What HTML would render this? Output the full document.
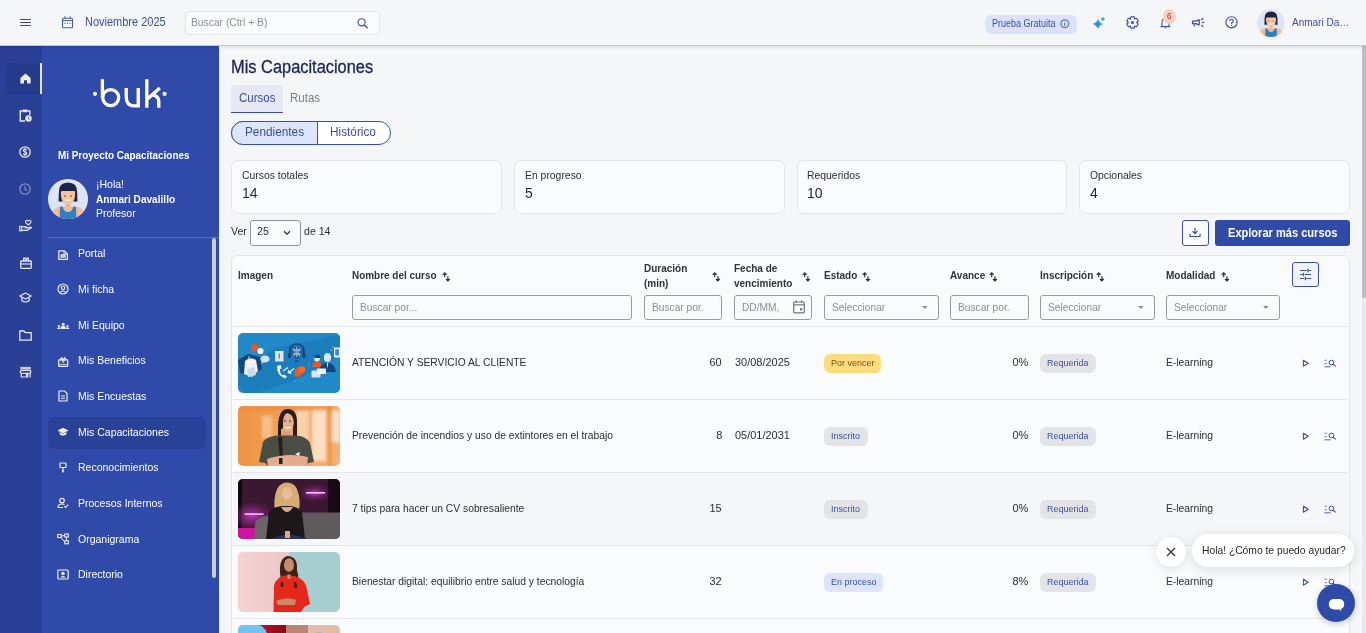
<!DOCTYPE html>
<html><head><meta charset="utf-8">
<style>
*{box-sizing:border-box;margin:0;padding:0}
html,body{width:1366px;height:633px;overflow:hidden;background:#f5f6f9;font-family:"Liberation Sans",sans-serif;color:#2b2f3a;position:relative}
.a{position:absolute}
.t{position:absolute;white-space:nowrap;line-height:1}
svg.a{overflow:visible}
</style></head>
<body>
<div class="a" style="left:219px;top:45px;width:1147px;height:588px;background:#f5f6f8"></div>
<div class="a" style="left:0px;top:45px;width:42px;height:588px;background:#2a3f96"></div>
<div class="a" style="left:42px;top:45px;width:177px;height:588px;background:#2f4aa8"></div>
<div class="a" style="left:0;top:0;width:1366px;height:45px;background:#f5f6f8;z-index:3"></div>
<div class="a" style="left:0;top:44.6px;width:1366px;height:1.4px;background:#c7c8cb;z-index:3"></div>
<div class="a" style="left:0;top:46px;width:1366px;height:4px;background:linear-gradient(rgba(0,0,0,.07),rgba(0,0,0,0));z-index:3"></div>
<svg class="a" style="left:19px;top:17px;z-index:4;" width="13" height="10" viewBox="0 0 13 10"><rect x="1" y="2" width="11" height="1.1" rx="0.5" fill="#2f47a6"/><rect x="1" y="5" width="11" height="1.1" rx="0.5" fill="#2f47a6"/><rect x="1" y="8" width="11" height="1.1" rx="0.5" fill="#2f47a6"/></svg>
<svg class="a" style="left:61px;top:15px;z-index:4;" width="13" height="14" viewBox="0 0 13 14"><rect x="1.5" y="3.3" width="10" height="9.4" rx="1" fill="none" stroke="#4a5db0" stroke-width="1.1"/><line x1="1.5" y1="5.6" x2="11.5" y2="5.6" stroke="#4a5db0" stroke-width="1"/><line x1="3.9" y1="1.2" x2="3.9" y2="3.6" stroke="#4a5db0" stroke-width="1.1"/><line x1="9.1" y1="1.2" x2="9.1" y2="3.6" stroke="#4a5db0" stroke-width="1.1"/><rect x="2.9" y="7.9" width="1.8" height="0.9" fill="#6f7ec0"/><rect x="6" y="7.7" width="1" height="1.2" fill="#4a5db0"/><rect x="8.3" y="7.9" width="1.8" height="0.9" fill="#6f7ec0"/></svg>
<div class="t" style="left:84.5px;top:15.77px;font-size:12.09px;color:#3a4ea6;font-weight:normal;transform:scaleX(0.91);transform-origin:0 0;z-index:4;">Noviembre 2025</div>
<div class="a" style="left:184.5px;top:10.5px;width:195px;height:24px;background:#fafbfc;border:1px solid #e1e3e7;border-radius:4px;z-index:4;"></div>
<div class="t" style="left:190.8px;top:17.42px;font-size:11.32px;color:#8b8e94;font-weight:normal;transform:scaleX(0.91);transform-origin:0 0;z-index:4;">Buscar (Ctrl + B)</div>
<svg class="a" style="left:357px;top:17.5px;z-index:4;" width="12" height="11" viewBox="0 0 12 11"><circle cx="4.6" cy="4.3" r="3.6" fill="none" stroke="#3a4ea6" stroke-width="1.1"/><line x1="7.3" y1="7" x2="10.6" y2="10.2" stroke="#3a4ea6" stroke-width="1.2"/></svg>
<div class="a" style="left:985px;top:15px;width:92px;height:19px;background:#dbe3fa;border-radius:6px;z-index:4;"></div>
<div class="t" style="left:992.4px;top:18.84px;font-size:10.00px;color:#3a4ea6;font-weight:normal;transform:scaleX(0.9);transform-origin:0 0;z-index:4;">Prueba Gratuita</div>
<svg class="a" style="left:1059.5px;top:18.9px;z-index:4;" width="10" height="10" viewBox="0 0 10 10"><circle cx="4.8" cy="4.7" r="4" fill="none" stroke="#3a4ea6" stroke-width="0.9"/><rect x="4.35" y="4" width="0.9" height="3" fill="#3a4ea6"/><rect x="4.35" y="2.3" width="0.9" height="0.9" fill="#3a4ea6"/></svg>
<svg class="a" style="left:1092px;top:16px;z-index:4;" width="14" height="14" viewBox="0 0 14 14"><defs><linearGradient id="sg" x1="0" y1="0" x2="1" y2="0"><stop offset="0" stop-color="#2d73f5"/><stop offset="1" stop-color="#37bd9c"/></linearGradient><linearGradient id="sg2" x1="0" y1="1" x2="1" y2="0"><stop offset="0" stop-color="#2f8ef0"/><stop offset="1" stop-color="#3cc4a0"/></linearGradient></defs><path d="M6 2.9 Q7.3 6.7 11.2 8 Q7.3 9.3 6 13.1 Q4.7 9.3 0.8 8 Q4.7 6.7 6 2.9Z" fill="url(#sg)"/><path d="M11 0.9 L13.1 3 L11 5.1 L8.9 3 Z" fill="url(#sg2)"/></svg>
<svg class="a" style="left:1125.5px;top:16px;z-index:4;" width="13" height="13" viewBox="0 0 13 13"><path d="M4.27 2.94 L4.87 0.83 L8.13 0.83 L8.73 2.94 L8.47 2.79 L10.60 2.26 L12.22 5.07 L10.70 6.65 L10.70 6.35 L12.22 7.93 L10.60 10.74 L8.47 10.21 L8.73 10.06 L8.13 12.17 L4.87 12.17 L4.27 10.06 L4.53 10.21 L2.40 10.74 L0.78 7.93 L2.30 6.35 L2.30 6.65 L0.78 5.07 L2.40 2.26 L4.53 2.79Z" fill="none" stroke="#3a4ea6" stroke-width="1.15" stroke-linejoin="round"/><circle cx="6.5" cy="6.5" r="1.5" fill="#3a4ea6"/></svg>
<svg class="a" style="left:1159.5px;top:17px;z-index:4;" width="11" height="12.5" viewBox="0 0 11 12.5"><path d="M2 9.5 L2 5.4 Q2 1.4 5.5 1.4 Q9 1.4 9 5.4 L9 9.5" fill="none" stroke="#4457ab" stroke-width="1.05"/><path d="M0.6 9.6 L10.4 9.6" stroke="#3a4ea6" stroke-width="1.2"/><path d="M5.5 10 L5.5 11.8" stroke="#8794cc" stroke-width="1.3"/></svg>
<div class="a" style="left:1163px;top:9.3px;width:13.2px;height:14.5px;background:#f9cfbd;border-radius:50%;z-index:4;"></div>
<div class="t" style="left:1167.4px;top:11.68px;font-size:9.00px;color:#b3283a;font-weight:normal;transform:scaleX(0.9);transform-origin:0 0;z-index:4;">6</div>
<svg class="a" style="left:1191px;top:17px;z-index:4;" width="14" height="11" viewBox="0 0 14 11"><path d="M1.5 4.2 L4.6 4.2 L8.2 2.8 L8.2 7.8 L4.6 6.6 L1.5 6.6 Z" fill="none" stroke="#3a4ea6" stroke-width="1.3" stroke-linejoin="round"/><line x1="3.2" y1="6.8" x2="3.2" y2="9.6" stroke="#3a4ea6" stroke-width="1.2"/><line x1="11" y1="5.5" x2="13.2" y2="5.5" stroke="#3a4ea6" stroke-width="1.2"/><line x1="10.3" y1="3" x2="12.2" y2="1.3" stroke="#3a4ea6" stroke-width="1.2"/><line x1="10.3" y1="8" x2="12.2" y2="9.7" stroke="#3a4ea6" stroke-width="1.2"/></svg>
<svg class="a" style="left:1224.5px;top:16px;z-index:4;" width="13" height="13" viewBox="0 0 13 13"><circle cx="6.5" cy="6.3" r="5.6" fill="none" stroke="#3a4ea6" stroke-width="1.15"/><path d="M4.7 4.9 Q4.7 3.2 6.5 3.2 Q8.3 3.2 8.3 4.8 Q8.3 5.8 7.2 6.4 Q6.5 6.8 6.5 8" fill="none" stroke="#3a4ea6" stroke-width="1.15"/><rect x="5.9" y="8.9" width="1.2" height="1.1" fill="#3a4ea6"/></svg>
<svg class="a" style="left:1257px;top:9px;z-index:4;" width="28" height="28" viewBox="0 0 40 40"><defs><clipPath id="c1257"><circle cx="20" cy="20" r="20"/></clipPath></defs><circle cx="20" cy="20" r="20" fill="#e9edf8"/><circle cx="20" cy="20" r="19.3" fill="#dde4f6"/><g clip-path="url(#c1257)"><path d="M10.8 14 Q10.5 3.6 20 3.6 Q29.5 3.6 29.2 14 L29.4 22.6 L25 22.6 L25 18 L15 18 L15 22.6 L10.6 22.6Z" fill="#1b2545"/><path d="M18 22 L22 22 L22.5 27.5 L17.5 27.5Z" fill="#e6a986"/><path d="M12.8 12 Q12.6 25.8 20 25.8 Q27.4 25.8 27.2 12Z" fill="#f4c3a2"/><path d="M12 13.5 Q12.5 5.5 20 5.8 Q27.5 5.5 28 13.5 Q25 9.5 21 10.8 Q16 9.2 12 13.5Z" fill="#1b2545"/><circle cx="17" cy="17" r="0.7" fill="#1b2545"/><circle cx="23" cy="17" r="0.7" fill="#1b2545"/><path d="M17.6 21 Q20 22.6 22.4 21 Q20 21.6 17.6 21Z" fill="#fff" stroke="#fff" stroke-width="0.6"/><path d="M2 40 Q3 29.5 11 27.5 L29 27.5 Q37 29.5 38 40Z" fill="#f2bb98"/><path d="M11.5 41 L12 28 Q14 27 14.8 28 Q16 33 20 33 Q24 33 25.2 28 Q26 27 28 28 L28.5 41Z" fill="#2f7fc3"/></g></svg>
<div class="t" style="left:1292px;top:16.70px;font-size:10.99px;color:#3a4ea6;font-weight:normal;transform:scaleX(0.91);transform-origin:0 0;z-index:4;">Anmari Da…</div>
<div class="a" style="left:6px;top:63px;width:36px;height:31px;background:#263a8b;border-radius:6px 0 0 6px"></div>
<div class="a" style="left:40px;top:63px;width:2px;height:31px;background:#e4e4e4"></div>
<svg class="a" style="left:20px;top:73px;" width="11" height="11" viewBox="0 0 11 11"><path d="M5.5 0.6 L10.6 5 L10.6 10.6 L7 10.6 L7 7.2 L4 7.2 L4 10.6 L0.4 10.6 L0.4 5 Z" fill="#ececec"/></svg>
<svg class="a" style="left:19px;top:109px;" width="13" height="13" viewBox="0 0 13 13"><path d="M3 2 L1.3 2 L1.3 12 L6 12" fill="none" stroke="#e8e8e8" stroke-width="1.4"/><path d="M8.8 2 L10.8 2 L10.8 6" fill="none" stroke="#e8e8e8" stroke-width="1.4"/><rect x="3.3" y="0.6" width="5.4" height="2.6" rx="0.6" fill="#e8e8e8"/><circle cx="9.5" cy="9.5" r="3.2" fill="#e8e8e8"/><path d="M9.5 8 L9.5 9.7 L10.6 10.4" fill="none" stroke="#2a3f96" stroke-width="0.8"/></svg>
<svg class="a" style="left:19px;top:146px;" width="12" height="12" viewBox="0 0 12 12"><circle cx="6" cy="6" r="5.2" fill="none" stroke="#e8e8e8" stroke-width="1.3"/><path d="M7.8 4.2 Q7.6 3.2 6 3.2 Q4.3 3.2 4.3 4.4 Q4.3 5.5 6 5.8 Q7.8 6.1 7.8 7.4 Q7.8 8.7 6 8.7 Q4.3 8.7 4.2 7.6" fill="none" stroke="#e8e8e8" stroke-width="1.1"/><line x1="6" y1="2" x2="6" y2="10" stroke="#e8e8e8" stroke-width="1"/></svg>
<svg class="a" style="left:19px;top:183px;" width="12" height="12" viewBox="0 0 12 12"><circle cx="6" cy="6" r="5.2" fill="none" stroke="#8090c8" stroke-width="1.3"/><path d="M6 3 L6 6.3 L8 7.6" fill="none" stroke="#8090c8" stroke-width="1.2"/></svg>
<svg class="a" style="left:19px;top:219px;" width="13" height="13" viewBox="0 0 13 13"><path d="M9.3 6 L7 3.8 Q6 2.6 7 1.6 Q8.2 0.7 9.3 2 Q10.4 0.7 11.6 1.6 Q12.6 2.6 11.6 3.8 Z" fill="none" stroke="#e8e8e8" stroke-width="1.1"/><rect x="0.7" y="7.3" width="2" height="4.5" fill="none" stroke="#e8e8e8" stroke-width="1.1"/><path d="M2.7 8 L6.5 7.6 L8 8.6 L5.5 9 M2.7 11.4 L8 11.4 L12.4 8.8 Q12 7.8 11 8.2 L8 9.6" fill="none" stroke="#e8e8e8" stroke-width="1.1"/></svg>
<svg class="a" style="left:19.5px;top:257px;" width="12" height="12" viewBox="0 0 12 12"><rect x="0.7" y="4" width="10.6" height="7.3" rx="0.8" fill="none" stroke="#e8e8e8" stroke-width="1.3"/><line x1="0.7" y1="7" x2="11.3" y2="7" stroke="#e8e8e8" stroke-width="1.1"/><path d="M3.6 4 L3.6 1 L8.4 1 L8.4 4 M4.5 1.5 L6 3.4 L7.5 1.5" fill="none" stroke="#e8e8e8" stroke-width="1.1"/></svg>
<svg class="a" style="left:19px;top:292px;" width="13" height="12" viewBox="0 0 13 12"><path d="M6.5 1 L12.2 4 L6.5 7 L0.8 4 Z" fill="none" stroke="#e8e8e8" stroke-width="1.2" stroke-linejoin="round"/><path d="M2.8 5.3 L2.8 8.6 Q6.5 11.4 10.2 8.6 L10.2 5.3" fill="none" stroke="#e8e8e8" stroke-width="1.2"/></svg>
<svg class="a" style="left:19px;top:330px;" width="13" height="11" viewBox="0 0 13 11"><path d="M0.8 1 L5 1 L6.3 2.6 L12.2 2.6 L12.2 10.2 L0.8 10.2 Z" fill="none" stroke="#e8e8e8" stroke-width="1.3" stroke-linejoin="round"/></svg>
<svg class="a" style="left:19px;top:366px;" width="13" height="13" viewBox="0 0 13 13"><rect x="1.3" y="0.9" width="10.5" height="2.6" fill="#c9cde0"/><rect x="1.3" y="4.4" width="10.6" height="3" rx="1.5" fill="none" stroke="#e6e6ea" stroke-width="1.2"/><path d="M2.3 7.4 L2.3 11 L7.6 11 L7.6 7.4 M8.7 7.4 L8.7 11.6 M11.1 7.4 L11.1 11.6" fill="none" stroke="#e6e6ea" stroke-width="1.2"/></svg>
<svg class="a" style="left:90px;top:76px;" width="80" height="34" viewBox="0 0 80 34"><g fill="none" stroke="#fff" stroke-width="3.3"><path d="M12.4 3.2 L12.4 21.5"/><circle cx="20.7" cy="21.6" r="8"/><path d="M36.2 12 L36.2 20.5 Q36.2 29.8 44 29.8 L48.25 29.8 L48.25 12"/><path d="M56.8 3.2 L56.8 31.7"/><path d="M56.8 23.5 L69.8 12 M62.5 18.6 Q68.8 20.5 68.8 25 L68.8 31.7"/></g><circle cx="5" cy="17.8" r="2.1" fill="#fff"/><circle cx="74.6" cy="17.8" r="2.1" fill="#fff"/></svg>
<div class="t" style="left:57.6px;top:150.29px;font-size:10.88px;color:#fff;font-weight:bold;transform:scaleX(0.91);transform-origin:0 0;">Mi Proyecto Capacitaciones</div>
<svg class="a" style="left:48px;top:178.5px;" width="40" height="40" viewBox="0 0 40 40"><defs><clipPath id="c48"><circle cx="20" cy="20" r="20"/></clipPath></defs><circle cx="20" cy="20" r="20" fill="#e9edf8"/><circle cx="20" cy="20" r="19.3" fill="#dde4f6"/><g clip-path="url(#c48)"><path d="M10.8 14 Q10.5 3.6 20 3.6 Q29.5 3.6 29.2 14 L29.4 22.6 L25 22.6 L25 18 L15 18 L15 22.6 L10.6 22.6Z" fill="#1b2545"/><path d="M18 22 L22 22 L22.5 27.5 L17.5 27.5Z" fill="#e6a986"/><path d="M12.8 12 Q12.6 25.8 20 25.8 Q27.4 25.8 27.2 12Z" fill="#f4c3a2"/><path d="M12 13.5 Q12.5 5.5 20 5.8 Q27.5 5.5 28 13.5 Q25 9.5 21 10.8 Q16 9.2 12 13.5Z" fill="#1b2545"/><circle cx="17" cy="17" r="0.7" fill="#1b2545"/><circle cx="23" cy="17" r="0.7" fill="#1b2545"/><path d="M17.6 21 Q20 22.6 22.4 21 Q20 21.6 17.6 21Z" fill="#fff" stroke="#fff" stroke-width="0.6"/><path d="M2 40 Q3 29.5 11 27.5 L29 27.5 Q37 29.5 38 40Z" fill="#f2bb98"/><path d="M11.5 41 L12 28 Q14 27 14.8 28 Q16 33 20 33 Q24 33 25.2 28 Q26 27 28 28 L28.5 41Z" fill="#2f7fc3"/></g></svg>
<div class="t" style="left:95.5px;top:178.53px;font-size:11.54px;color:#fff;font-weight:normal;transform:scaleX(0.91);transform-origin:0 0;">¡Hola!</div>
<div class="t" style="left:95.5px;top:193.60px;font-size:11.10px;color:#fff;font-weight:bold;transform:scaleX(0.91);transform-origin:0 0;">Anmari Davalillo</div>
<div class="t" style="left:95.5px;top:208.03px;font-size:11.54px;color:#fff;font-weight:normal;transform:scaleX(0.91);transform-origin:0 0;">Profesor</div>
<div class="a" style="left:48px;top:237px;width:171px;height:1px;background:#5a70bd"></div>
<div class="a" style="left:212px;top:238px;width:4px;height:340px;background:#c8ccd8;border-radius:2px"></div>
<div class="a" style="left:48px;top:417px;width:158px;height:31.5px;background:#2a4198;border-radius:6px"></div>
<div class="t" style="left:78px;top:247.93px;font-size:11.54px;color:#fff;font-weight:normal;transform:scaleX(0.91);transform-origin:0 0;">Portal</div>
<div class="t" style="left:78px;top:283.53px;font-size:11.54px;color:#fff;font-weight:normal;transform:scaleX(0.91);transform-origin:0 0;">Mi ficha</div>
<div class="t" style="left:78px;top:320.43px;font-size:11.54px;color:#fff;font-weight:normal;transform:scaleX(0.91);transform-origin:0 0;">Mi Equipo</div>
<div class="t" style="left:78px;top:354.83px;font-size:11.54px;color:#fff;font-weight:normal;transform:scaleX(0.91);transform-origin:0 0;">Mis Beneficios</div>
<div class="t" style="left:78px;top:391.43px;font-size:11.54px;color:#fff;font-weight:normal;transform:scaleX(0.91);transform-origin:0 0;">Mis Encuestas</div>
<div class="t" style="left:78px;top:427.43px;font-size:11.54px;color:#fff;font-weight:normal;transform:scaleX(0.91);transform-origin:0 0;">Mis Capacitaciones</div>
<div class="t" style="left:78px;top:461.73px;font-size:11.54px;color:#fff;font-weight:normal;transform:scaleX(0.91);transform-origin:0 0;">Reconocimientos</div>
<div class="t" style="left:78px;top:497.53px;font-size:11.54px;color:#fff;font-weight:normal;transform:scaleX(0.91);transform-origin:0 0;">Procesos Internos</div>
<div class="t" style="left:78px;top:534.23px;font-size:11.54px;color:#fff;font-weight:normal;transform:scaleX(0.91);transform-origin:0 0;">Organigrama</div>
<div class="t" style="left:78px;top:569.03px;font-size:11.54px;color:#fff;font-weight:normal;transform:scaleX(0.91);transform-origin:0 0;">Directorio</div>
<svg class="a" style="left:57px;top:247.7px;" width="12" height="12" viewBox="0 0 12 12"><path d="M1.8 2.8 L7.4 2.8 L10.4 5.8 L10.4 11.4 L1.8 11.4 Z" fill="none" stroke="#f0f0f0" stroke-width="1.2" stroke-linejoin="round"/><rect x="3.4" y="6" width="5.4" height="3.9" fill="#c8cde6"/><path d="M7 3 L7 6 L10 6" fill="none" stroke="#f0f0f0" stroke-width="1"/></svg>
<svg class="a" style="left:57px;top:283.3px;" width="12" height="12" viewBox="0 0 12 12"><circle cx="6" cy="6" r="5" fill="none" stroke="#f0f0f0" stroke-width="1.2"/><circle cx="6" cy="4.8" r="1.8" fill="none" stroke="#f0f0f0" stroke-width="1.1"/><path d="M3 9.5 Q6 6.5 9 9.5" fill="none" stroke="#f0f0f0" stroke-width="1.1"/></svg>
<svg class="a" style="left:57px;top:319.2px;" width="12" height="12" viewBox="0 0 12 12"><circle cx="6.2" cy="5.3" r="1.5" fill="#f0f0f0"/><path d="M3.6 9.9 L3.6 8.4 Q3.6 7.1 6.2 7.1 Q8.8 7.1 8.8 8.4 L8.8 9.9Z" fill="#f0f0f0"/><circle cx="1.9" cy="7" r="1.1" fill="#f0f0f0"/><circle cx="10.5" cy="7" r="1.1" fill="#f0f0f0"/><path d="M0 9.9 Q0 8.3 1.9 8.3 Q3 8.3 3.2 8.8 L3.2 9.9Z M12.4 9.9 Q12.4 8.3 10.5 8.3 Q9.4 8.3 9.2 8.8 L9.2 9.9Z" fill="#f0f0f0"/></svg>
<svg class="a" style="left:57px;top:354.6px;" width="12" height="12" viewBox="0 0 12 12"><rect x="1.7" y="4.9" width="9" height="6.5" rx="0.5" fill="none" stroke="#f0f0f0" stroke-width="1.2"/><rect x="2.3" y="8.9" width="7.8" height="1" fill="#c8cde6"/><path d="M3.2 4.9 L4.6 2.6 L6.2 4.6 L7.8 2.6 L9.2 4.9" fill="none" stroke="#f0f0f0" stroke-width="1.1"/><path d="M5 5 L6.2 7.5 L7.4 5" fill="none" stroke="#f0f0f0" stroke-width="0.9"/></svg>
<svg class="a" style="left:57px;top:390.2px;" width="12" height="12" viewBox="0 0 12 12"><path d="M2 1 L7.5 1 L10 3.5 L10 11 L2 11 Z" fill="none" stroke="#f0f0f0" stroke-width="1.2"/><line x1="4" y1="6" x2="8" y2="6" stroke="#f0f0f0" stroke-width="1"/><line x1="4" y1="8.3" x2="8" y2="8.3" stroke="#f0f0f0" stroke-width="1"/></svg>
<svg class="a" style="left:57px;top:426.2px;" width="12" height="12" viewBox="0 0 12 12"><path d="M6 1.8 L11.5 4.5 L6 7.2 L0.5 4.5 Z" fill="#f0f0f0"/><path d="M2.7 6 L2.7 8.6 Q6 10.8 9.3 8.6 L9.3 6 L6 7.8 Z" fill="#f0f0f0"/></svg>
<svg class="a" style="left:57px;top:461.5px;" width="12" height="12" viewBox="0 0 12 12"><rect x="3" y="1" width="6" height="4.5" rx="0.8" fill="none" stroke="#f0f0f0" stroke-width="1.2"/><line x1="6" y1="5.5" x2="6" y2="8" stroke="#f0f0f0" stroke-width="1.2"/><path d="M6 7.5 L7.3 9 L6 11 L4.7 9 Z" fill="#f0f0f0"/></svg>
<svg class="a" style="left:57px;top:497.3px;" width="12" height="12" viewBox="0 0 12 12"><circle cx="5" cy="3.6" r="2.3" fill="none" stroke="#f0f0f0" stroke-width="1.2"/><path d="M1 10.5 Q1 7 5 7 Q6.5 7 7.5 7.6 M1 10.5 L6 10.5" fill="none" stroke="#f0f0f0" stroke-width="1.2"/><path d="M7.3 9.2 L8.6 10.5 L11.2 7.6" fill="none" stroke="#f0f0f0" stroke-width="1.1"/></svg>
<svg class="a" style="left:57px;top:533px;" width="12" height="12" viewBox="0 0 12 12"><rect x="0.7" y="1.5" width="3.5" height="3" fill="none" stroke="#f0f0f0" stroke-width="1.1"/><rect x="7.8" y="1" width="3.5" height="3" fill="none" stroke="#f0f0f0" stroke-width="1.1"/><rect x="7.8" y="7.8" width="3.5" height="3" fill="none" stroke="#f0f0f0" stroke-width="1.1"/><path d="M4.2 3 L7.8 2.5 M9.5 4 L9.5 7.8 M4 4.5 L7.8 9" fill="none" stroke="#f0f0f0" stroke-width="1"/></svg>
<svg class="a" style="left:57px;top:568px;" width="12" height="12" viewBox="0 0 12 12"><rect x="0.8" y="2" width="10.4" height="9" rx="1" fill="none" stroke="#f0f0f0" stroke-width="1.2"/><circle cx="6" cy="5.5" r="1.7" fill="#f0f0f0"/><path d="M3 9.5 Q6 6.5 9 9.5Z" fill="#f0f0f0"/></svg>
<div class="t" style="left:230.8px;top:58.04px;font-size:18.02px;color:#1b2457;font-weight:normal;transform:scaleX(0.91);transform-origin:0 0;-webkit-text-stroke:0.3px #1b2457;">Mis Capacitaciones</div>
<div class="a" style="left:231px;top:84.5px;width:52px;height:28px;background:#e6e9f3;border-radius:4px 4px 0 0"></div>
<div class="a" style="left:231px;top:111.5px;width:52px;height:1.6px;background:#3a4ea6"></div>
<div class="t" style="left:238.5px;top:92.30px;font-size:12.64px;color:#3a4ea6;font-weight:normal;transform:scaleX(0.91);transform-origin:0 0;">Cursos</div>
<div class="t" style="left:289.8px;top:92.30px;font-size:12.64px;color:#7b7e86;font-weight:normal;transform:scaleX(0.91);transform-origin:0 0;">Rutas</div>
<div class="a" style="left:231px;top:121px;width:160px;height:24px;background:#fff;border:1.2px solid #3a4ea6;border-radius:12px"></div>
<div class="a" style="left:231px;top:121px;width:87px;height:24px;background:#dde5fb;border:1.2px solid #3a4ea6;border-radius:12px 0 0 12px"></div>
<div class="t" style="left:244.5px;top:126.42px;font-size:12.97px;color:#3a4ea6;font-weight:normal;transform:scaleX(0.91);transform-origin:0 0;">Pendientes</div>
<div class="t" style="left:329.5px;top:126.42px;font-size:12.97px;color:#3a4ea6;font-weight:normal;transform:scaleX(0.91);transform-origin:0 0;">Histórico</div>
<div class="a" style="left:231px;top:160px;width:270.5px;height:53.5px;background:#fafbfc;border:1px solid #e4e5e8;border-radius:7px"></div>
<div class="t" style="left:241.5px;top:169.93px;font-size:11.43px;color:#2a2d37;font-weight:normal;transform:scaleX(0.91);transform-origin:0 0;">Cursos totales</div>
<div class="t" style="left:241.5px;top:184.68px;font-size:15.38px;color:#1f2230;font-weight:normal;transform:scaleX(0.91);transform-origin:0 0;">14</div>
<div class="a" style="left:514px;top:160px;width:270.5px;height:53.5px;background:#fafbfc;border:1px solid #e4e5e8;border-radius:7px"></div>
<div class="t" style="left:524.5px;top:169.93px;font-size:11.43px;color:#2a2d37;font-weight:normal;transform:scaleX(0.91);transform-origin:0 0;">En progreso</div>
<div class="t" style="left:524.5px;top:184.68px;font-size:15.38px;color:#1f2230;font-weight:normal;transform:scaleX(0.91);transform-origin:0 0;">5</div>
<div class="a" style="left:796.6px;top:160px;width:270.5px;height:53.5px;background:#fafbfc;border:1px solid #e4e5e8;border-radius:7px"></div>
<div class="t" style="left:807.1px;top:169.93px;font-size:11.43px;color:#2a2d37;font-weight:normal;transform:scaleX(0.91);transform-origin:0 0;">Requeridos</div>
<div class="t" style="left:807.1px;top:184.68px;font-size:15.38px;color:#1f2230;font-weight:normal;transform:scaleX(0.91);transform-origin:0 0;">10</div>
<div class="a" style="left:1079px;top:160px;width:270.5px;height:53.5px;background:#fafbfc;border:1px solid #e4e5e8;border-radius:7px"></div>
<div class="t" style="left:1089.5px;top:169.93px;font-size:11.43px;color:#2a2d37;font-weight:normal;transform:scaleX(0.91);transform-origin:0 0;">Opcionales</div>
<div class="t" style="left:1089.5px;top:184.68px;font-size:15.38px;color:#1f2230;font-weight:normal;transform:scaleX(0.91);transform-origin:0 0;">4</div>
<div class="t" style="left:231.3px;top:225.14px;font-size:11.65px;color:#2a2d37;font-weight:normal;transform:scaleX(0.91);transform-origin:0 0;">Ver</div>
<div class="a" style="left:250px;top:220px;width:51px;height:25.6px;background:#fafbfc;border:1px solid #8f9298;border-radius:3px"></div>
<div class="t" style="left:257px;top:225.04px;font-size:11.65px;color:#2a2d37;font-weight:normal;transform:scaleX(0.91);transform-origin:0 0;">25</div>
<svg class="a" style="left:283px;top:229.5px;" width="8" height="6" viewBox="0 0 8 6"><path d="M1 1.2 L4 4.2 L7 1.2" fill="none" stroke="#2a2d37" stroke-width="1.3"/></svg>
<div class="t" style="left:303.5px;top:225.14px;font-size:11.65px;color:#2a2d37;font-weight:normal;transform:scaleX(0.91);transform-origin:0 0;">de 14</div>
<div class="a" style="left:1182.3px;top:220px;width:26.4px;height:25.6px;background:#fafbfc;border:1px solid #3a4ea6;border-radius:3px"></div>
<svg class="a" style="left:1189px;top:227px;" width="12" height="11" viewBox="0 0 12 11"><path d="M6 0.8 L6 6.5 M3.5 4.2 L6 6.7 L8.5 4.2" fill="none" stroke="#3a4ea6" stroke-width="1.2"/><path d="M1 6.8 L1 9.5 L11 9.5 L11 6.8" fill="none" stroke="#3a4ea6" stroke-width="1.2"/></svg>
<div class="a" style="left:1215.2px;top:220px;width:134.6px;height:25.6px;background:#2f4aa7;border-radius:3px"></div>
<div class="t" style="left:1227.5px;top:226.70px;font-size:12.16px;color:#fff;font-weight:bold;transform:scaleX(0.91);transform-origin:0 0;">Explorar más cursos</div>
<div class="a" style="left:231px;top:255px;width:1118.5px;height:400px;background:#fafbfc;border:1px solid #e3e5ea;border-radius:6px"></div>
<div class="t" style="left:238.2px;top:269.90px;font-size:10.99px;color:#30333b;font-weight:bold;transform:scaleX(0.91);transform-origin:0 0;">Imagen</div>
<div class="t" style="left:352.4px;top:269.94px;font-size:10.93px;color:#30333b;font-weight:bold;transform:scaleX(0.91);transform-origin:0 0;">Nombre del curso</div>
<svg class="a" style="left:441.5px;top:272.2px;" width="9" height="10" viewBox="0 0 9 10"><g fill="none" stroke="#2a2d37" stroke-width="1.15"><path d="M2.7 1 L2.7 5.2 M0.7 2.9 L2.7 0.8 L4.7 2.9"/><path d="M5.9 4.2 L5.9 8.8 M3.9 6.9 L5.9 9 L7.9 6.9"/></g></svg>
<div class="t" style="left:644.2px;top:262.60px;font-size:10.99px;color:#30333b;font-weight:bold;transform:scaleX(0.91);transform-origin:0 0;">Duración</div>
<div class="t" style="left:644.2px;top:278.00px;font-size:10.99px;color:#30333b;font-weight:bold;transform:scaleX(0.91);transform-origin:0 0;">(min)</div>
<svg class="a" style="left:711.5px;top:272.2px;" width="9" height="10" viewBox="0 0 9 10"><g fill="none" stroke="#2a2d37" stroke-width="1.15"><path d="M2.7 1 L2.7 5.2 M0.7 2.9 L2.7 0.8 L4.7 2.9"/><path d="M5.9 4.2 L5.9 8.8 M3.9 6.9 L5.9 9 L7.9 6.9"/></g></svg>
<div class="t" style="left:734.2px;top:262.60px;font-size:10.99px;color:#30333b;font-weight:bold;transform:scaleX(0.91);transform-origin:0 0;">Fecha de</div>
<div class="t" style="left:734.2px;top:278.00px;font-size:10.99px;color:#30333b;font-weight:bold;transform:scaleX(0.91);transform-origin:0 0;">vencimiento</div>
<svg class="a" style="left:801.6px;top:272.2px;" width="9" height="10" viewBox="0 0 9 10"><g fill="none" stroke="#2a2d37" stroke-width="1.15"><path d="M2.7 1 L2.7 5.2 M0.7 2.9 L2.7 0.8 L4.7 2.9"/><path d="M5.9 4.2 L5.9 8.8 M3.9 6.9 L5.9 9 L7.9 6.9"/></g></svg>
<div class="t" style="left:824.3px;top:269.90px;font-size:10.99px;color:#30333b;font-weight:bold;transform:scaleX(0.91);transform-origin:0 0;">Estado</div>
<svg class="a" style="left:861.7px;top:272.2px;" width="9" height="10" viewBox="0 0 9 10"><g fill="none" stroke="#2a2d37" stroke-width="1.15"><path d="M2.7 1 L2.7 5.2 M0.7 2.9 L2.7 0.8 L4.7 2.9"/><path d="M5.9 4.2 L5.9 8.8 M3.9 6.9 L5.9 9 L7.9 6.9"/></g></svg>
<div class="t" style="left:950.3px;top:269.90px;font-size:10.99px;color:#30333b;font-weight:bold;transform:scaleX(0.91);transform-origin:0 0;">Avance</div>
<svg class="a" style="left:988.7px;top:272.2px;" width="9" height="10" viewBox="0 0 9 10"><g fill="none" stroke="#2a2d37" stroke-width="1.15"><path d="M2.7 1 L2.7 5.2 M0.7 2.9 L2.7 0.8 L4.7 2.9"/><path d="M5.9 4.2 L5.9 8.8 M3.9 6.9 L5.9 9 L7.9 6.9"/></g></svg>
<div class="t" style="left:1040.3px;top:269.90px;font-size:10.99px;color:#30333b;font-weight:bold;transform:scaleX(0.91);transform-origin:0 0;">Inscripción</div>
<svg class="a" style="left:1096.3px;top:272.2px;" width="9" height="10" viewBox="0 0 9 10"><g fill="none" stroke="#2a2d37" stroke-width="1.15"><path d="M2.7 1 L2.7 5.2 M0.7 2.9 L2.7 0.8 L4.7 2.9"/><path d="M5.9 4.2 L5.9 8.8 M3.9 6.9 L5.9 9 L7.9 6.9"/></g></svg>
<div class="t" style="left:1166px;top:269.90px;font-size:10.99px;color:#30333b;font-weight:bold;transform:scaleX(0.91);transform-origin:0 0;">Modalidad</div>
<svg class="a" style="left:1220.7px;top:272.2px;" width="9" height="10" viewBox="0 0 9 10"><g fill="none" stroke="#2a2d37" stroke-width="1.15"><path d="M2.7 1 L2.7 5.2 M0.7 2.9 L2.7 0.8 L4.7 2.9"/><path d="M5.9 4.2 L5.9 8.8 M3.9 6.9 L5.9 9 L7.9 6.9"/></g></svg>
<div class="a" style="left:1292.2px;top:262.3px;width:26.5px;height:24.4px;background:#f3f4f6;border:1px solid #3a4ea6;border-radius:3px"></div>
<svg class="a" style="left:1299px;top:268px;" width="14" height="13" viewBox="0 0 14 13"><g stroke="#3a4ea6" stroke-width="1.1" fill="none"><path d="M1 2.5 L7.6 2.5 M10 2.5 L12.2 2.5 M1 6.5 L3.2 6.5 M5.6 6.5 L12.2 6.5 M1 10.5 L5.4 10.5 M7.6 10.5 L12.2 10.5"/><path d="M9 0.8 L9 4.2 M4.4 4.8 L4.4 8.2 M6.5 8.8 L6.5 12.2" stroke-width="1.3"/></g></svg>
<div class="a" style="left:352px;top:295px;width:280px;height:25px;background:#fafbfc;border:1px solid #9a9b9f;border-radius:3px"></div>
<div class="t" style="left:359.6px;top:302.41px;font-size:11.21px;color:#8b8e94;font-weight:normal;transform:scaleX(0.91);transform-origin:0 0;">Buscar por...</div>
<div class="a" style="left:644px;top:295px;width:78px;height:25px;background:#fafbfc;border:1px solid #9a9b9f;border-radius:3px"></div>
<div class="t" style="left:651.6px;top:302.41px;font-size:11.21px;color:#8b8e94;font-weight:normal;transform:scaleX(0.91);transform-origin:0 0;">Buscar por.</div>
<div class="a" style="left:734px;top:295px;width:78px;height:25px;background:#fafbfc;border:1px solid #9a9b9f;border-radius:3px"></div>
<div class="t" style="left:741.6px;top:302.41px;font-size:11.21px;color:#8b8e94;font-weight:normal;transform:scaleX(0.91);transform-origin:0 0;">DD/MM,</div>
<svg class="a" style="left:792.5px;top:300.4px;" width="12" height="13.5" viewBox="0 0 12 13.5"><rect x="0.7" y="2" width="10.6" height="10.8" rx="1" fill="none" stroke="#6f7278" stroke-width="1.2"/><line x1="0.7" y1="4.8" x2="11.3" y2="4.8" stroke="#6f7278" stroke-width="1.1"/><line x1="3.3" y1="0.2" x2="3.3" y2="2.8" stroke="#6f7278" stroke-width="1.2"/><line x1="8.7" y1="0.2" x2="8.7" y2="2.8" stroke="#6f7278" stroke-width="1.2"/><rect x="7" y="8.2" width="2.2" height="2.2" fill="#6f7278"/></svg>
<div class="a" style="left:824px;top:295px;width:114.5px;height:25px;background:#fafbfc;border:1px solid #9a9b9f;border-radius:3px"></div>
<div class="t" style="left:831.6px;top:302.41px;font-size:11.21px;color:#8b8e94;font-weight:normal;transform:scaleX(0.91);transform-origin:0 0;">Seleccionar</div>
<svg class="a" style="left:921.7px;top:305.8px;" width="6" height="3.5" viewBox="0 0 6 3.5"><path d="M0 0 L5.6 0 L2.8 2.9Z" fill="#8c8d91"/></svg>
<div class="a" style="left:950px;top:295px;width:78.5px;height:25px;background:#fafbfc;border:1px solid #9a9b9f;border-radius:3px"></div>
<div class="t" style="left:957.6px;top:302.41px;font-size:11.21px;color:#8b8e94;font-weight:normal;transform:scaleX(0.91);transform-origin:0 0;">Buscar por.</div>
<div class="a" style="left:1040px;top:295px;width:114.5px;height:25px;background:#fafbfc;border:1px solid #9a9b9f;border-radius:3px"></div>
<div class="t" style="left:1047.6px;top:302.41px;font-size:11.21px;color:#8b8e94;font-weight:normal;transform:scaleX(0.91);transform-origin:0 0;">Seleccionar</div>
<svg class="a" style="left:1137.7px;top:305.8px;" width="6" height="3.5" viewBox="0 0 6 3.5"><path d="M0 0 L5.6 0 L2.8 2.9Z" fill="#8c8d91"/></svg>
<div class="a" style="left:1166px;top:295px;width:114px;height:25px;background:#fafbfc;border:1px solid #9a9b9f;border-radius:3px"></div>
<div class="t" style="left:1173.6px;top:302.41px;font-size:11.21px;color:#8b8e94;font-weight:normal;transform:scaleX(0.91);transform-origin:0 0;">Seleccionar</div>
<svg class="a" style="left:1263.2px;top:305.8px;" width="6" height="3.5" viewBox="0 0 6 3.5"><path d="M0 0 L5.6 0 L2.8 2.9Z" fill="#8c8d91"/></svg>
<div class="a" style="left:232.5px;top:326px;width:1115.5px;height:1px;background:#e3e5ea"></div>
<div class="a" style="left:232.5px;top:399px;width:1115.5px;height:1px;background:#e3e5ea"></div>
<div class="a" style="left:232.5px;top:472px;width:1115.5px;height:73px;background:#f5f6f8"></div>
<div class="a" style="left:232.5px;top:472px;width:1115.5px;height:1px;background:#e3e5ea"></div>
<div class="a" style="left:232.5px;top:545px;width:1115.5px;height:1px;background:#e3e5ea"></div>
<div class="a" style="left:232.5px;top:618px;width:1115.5px;height:1px;background:#e3e5ea"></div>
<svg class="a" style="left:238px;top:333px;border-radius:5px" width="102" height="60" viewBox="0 0 102 60"><defs><clipPath id="r1"><rect width="102" height="60" rx="5"/></clipPath></defs><g clip-path="url(#r1)"><rect width="102" height="60" fill="#2189c8"/><path d="M0 52 L0 38 L40 14 L102 2 L102 22 L60 46 L20 60 L8 60Z" fill="#1a7ab8" opacity="0.75"/><path d="M0 27 L10 21 L22 24 L24 36 L14 43 L2 40Z" fill="#14457e"/><path d="M7 28 Q12 23 18 27 L20 38 L14 44 L6 41 Z" fill="#eef2f5"/><path d="M9 36 L16 34 L18 42 L10 44Z" fill="#c9dbe6"/><path d="M11 23 Q10 30 12 36" fill="none" stroke="#eef2f5" stroke-width="0.8"/><circle cx="16.7" cy="14.5" r="3.6" fill="#f0561f"/><path d="M14 17 L13.5 19.5 L16 17.8Z" fill="#f0561f"/><circle cx="22.4" cy="18" r="3.1" fill="#f4f6f8"/><ellipse cx="27" cy="26" rx="4.6" ry="3.6" fill="#d4e3ec"/><path d="M24 28.5 L23 31 L26 29Z" fill="#d4e3ec"/><rect x="37" y="18" width="8.5" height="10.5" fill="#dce6ee"/><rect x="40.6" y="20.5" width="1.4" height="5" fill="#f0561f"/><circle cx="58.8" cy="19.5" r="6.2" fill="#1c5e9a"/><path d="M51.5 22 Q51 11 58.8 11 Q66.6 11 66.1 22" fill="none" stroke="#14457e" stroke-width="1.6"/><rect x="50" y="20" width="3" height="5" rx="1" fill="#14457e"/><rect x="64.6" y="20" width="3" height="5" rx="1" fill="#14457e"/><path d="M54.5 17 L63 17 M54.5 21 L63 21 M58.8 14 L58.8 24 M55.5 15.5 Q58.8 19.5 55.5 23.5 M62 15.5 Q58.8 19.5 62 23.5" fill="none" stroke="#e6eef4" stroke-width="0.7"/><rect x="57" y="27.5" width="4" height="1.5" fill="#14457e"/><path d="M39 33 Q38.5 42 47 45.5 L49 43.8 L46 41.5 L44.5 42.6 Q41.5 40 42 36 L43.5 35.5 L42.6 32 Z" fill="#f4f6f8"/><path d="M45 38 L50 34.5 M50.5 40 L56 35.5 M50.5 40 L53.5 40 M50.5 40 L50.5 37" fill="none" stroke="#e6eef4" stroke-width="1.3"/><circle cx="61" cy="38.5" r="4.4" fill="#f0561f"/><circle cx="64" cy="36.5" r="3.2" fill="#f36d30"/><circle cx="59" cy="41.5" r="2.5" fill="#ee5a20"/><circle cx="79" cy="26" r="2.8" fill="#e4ecf1"/><path d="M77 22.5 Q79 20.5 82 22.5 L82 25 L76.5 25Z" fill="#14457e"/><path d="M74 34 Q75 28 79 28.5 Q83 28 84 34Z" fill="#f0561f"/><ellipse cx="89.5" cy="24.5" rx="3.6" ry="4.5" fill="#dfe8ee"/><path d="M80.5 39 Q82 30 89.5 30 Q97 30 98 39Z" fill="#14457e"/><path d="M88.8 30 L89.5 36 L90.2 30Z" fill="#e4ecf1"/><rect x="73.5" y="37.5" width="9" height="7" rx="0.8" fill="#dbe5ec"/><rect x="79" y="35.5" width="9" height="5.5" rx="0.8" fill="#eef2f5"/><rect x="96" y="14.5" width="6" height="10" rx="0.8" fill="#eef2f5"/><rect x="97.2" y="16.3" width="3.8" height="6.2" fill="#3b8fd0"/><circle cx="93" cy="17" r="0.7" fill="#9fd0ee"/><circle cx="95" cy="14" r="0.7" fill="#9fd0ee"/><circle cx="71" cy="33" r="0.6" fill="#9fd0ee"/><circle cx="71" cy="30" r="0.6" fill="#9fd0ee"/><circle cx="64" cy="48" r="0.6" fill="#9fd0ee"/><circle cx="57" cy="48" r="0.6" fill="#9fd0ee"/></g></svg>
<svg class="a" style="left:238px;top:406px;border-radius:5px" width="102" height="60" viewBox="0 0 102 60"><defs><clipPath id="r2"><rect width="102" height="60" rx="5"/></clipPath><linearGradient id="og" x1="0" x2="1"><stop offset="0" stop-color="#ee9443"/><stop offset="0.45" stop-color="#f0a158"/><stop offset="1" stop-color="#f4b27a"/></linearGradient><filter id="bl2" x="-20%" y="-20%" width="140%" height="140%"><feGaussianBlur stdDeviation="1.8"/></filter></defs><g clip-path="url(#r2)"><rect width="102" height="60" fill="url(#og)"/><g filter="url(#bl2)"><rect x="24" y="10" width="10" height="22" fill="#f6c89c" opacity="0.8"/><rect x="58" y="4" width="13" height="40" fill="#fad7b4" opacity="0.9"/><rect x="74" y="3" width="14" height="52" fill="#fde4cb" opacity="0.9"/><rect x="89" y="-2" width="5" height="64" fill="#f09a4a"/><rect x="94" y="0" width="8" height="36" fill="#fbe2c9"/><rect x="0" y="0" width="102" height="5" fill="#e98a38" opacity="0.6"/></g><path d="M40 26 Q39 4 49 3 Q59 3 59 16 L59 30 L55 30 L55 20 L43 20 L43 50 L40 52Z" fill="#2a1c16"/><rect x="45.5" y="24" width="7" height="8" fill="#d99f80"/><ellipse cx="49.5" cy="16.5" rx="6.3" ry="9.3" fill="#e6b092"/><path d="M46.5 21 Q49.5 23 52.5 21" fill="none" stroke="#fff" stroke-width="1.1"/><circle cx="47" cy="15" r="0.8" fill="#2a1c16"/><circle cx="52" cy="15" r="0.8" fill="#2a1c16"/><path d="M42 24 Q40 4 50 4 Q44 10 45 22 Z" fill="#2a1c16"/><path d="M21 56 L25 36 Q29 30 41 29.5 L58 29.5 Q69 30.5 72 37 L76 56 L70 57 L68 60 L30 60 L27 57Z" fill="#4a4d44"/><path d="M40 31 L42 52 L45 52 L44 31Z" fill="#2a1c16"/><path d="M29 53 Q50 46 70 51 L69 60 L30 60Z" fill="#e3ac8d"/><rect x="41" y="52" width="3.5" height="6" fill="#222"/><path d="M57 48 L62 46 L61 50Z" fill="#eee"/></g></svg>
<svg class="a" style="left:238px;top:479px;border-radius:5px" width="102" height="60" viewBox="0 0 102 60"><defs><clipPath id="r3"><rect width="102" height="60" rx="5"/></clipPath><radialGradient id="gl"><stop offset="0" stop-color="#d13ad0" stop-opacity="0.85"/><stop offset="1" stop-color="#7a1f6a" stop-opacity="0"/></radialGradient></defs><g clip-path="url(#r3)"><rect width="102" height="60" fill="#3b1832"/><rect x="0" y="0" width="4" height="60" fill="#120810"/><rect x="90" y="0" width="12" height="34" fill="#170a14"/><ellipse cx="14" cy="37" rx="24" ry="15" fill="url(#gl)"/><rect x="6.5" y="34.3" width="19" height="1.6" fill="#fbc0ff"/><ellipse cx="77" cy="14" rx="17" ry="9" fill="url(#gl)"/><rect x="68" y="13" width="19" height="1.6" fill="#fbc0ff"/><rect x="0" y="49" width="18" height="11" fill="#d0149f"/><rect x="58" y="33.5" width="44" height="26.5" fill="#5f5b5c"/><path d="M16 60 L17 44 Q20 37 30 37 L33 60Z" fill="#6a6667"/><rect x="30" y="45" width="35" height="15" fill="#585455"/><path d="M37 31 Q35 20 39 10 Q43 3 49 3.5 Q56 3.5 59 10 Q63 20 61 31 Q55 27 49 27 Q42 27 37 31Z" fill="#d5ad74"/><ellipse cx="49" cy="14.5" rx="5" ry="6.5" fill="#e7bb9b"/><path d="M28 60 L31 33 Q37 26 49 27 Q60 27 64 33 L67 60Z" fill="#1d1719"/><path d="M43 28 Q49 38 55 28Z" fill="#dca98b"/><path d="M34 60 Q49 52 70 60Z" fill="#25355a"/><rect x="47" y="52" width="5" height="7" fill="#d9a98a"/></g></svg>
<svg class="a" style="left:238px;top:552px;border-radius:5px" width="102" height="60" viewBox="0 0 102 60"><defs><clipPath id="r4"><rect width="102" height="60" rx="5"/></clipPath><linearGradient id="pk" x1="0" x2="1"><stop offset="0" stop-color="#f6d3d2"/><stop offset="1" stop-color="#ebc6c6"/></linearGradient></defs><g clip-path="url(#r4)"><rect width="52" height="60" fill="url(#pk)"/><rect x="51.3" width="51" height="60" fill="#a6cdd0"/><path d="M44 32 Q38 8 49 4 Q60 4 59 18 Q62 28 58 35 L45 35Z" fill="#3a2419"/><ellipse cx="51" cy="13" rx="5" ry="6.8" fill="#c98d69"/><path d="M35.5 60 L36 34 Q38 24 50 23 Q64 24 68 33 L72 52 L66 55 L63 60Z" fill="#e6281b"/><path d="M44 30 L44 35 M57 30 L58 36" stroke="#3a2419" stroke-width="2.5"/><path d="M38 49 Q48 44 58 48 L57 53 L40 53Z" fill="#cf8865"/><path d="M51 22.5 L51 27" stroke="#c98d69" stroke-width="3"/></g></svg>
<svg class="a" style="left:238px;top:625px;border-radius:5px" width="102" height="60" viewBox="0 0 102 60"><defs><clipPath id="r5"><rect width="102" height="60" rx="5"/></clipPath><linearGradient id="rd" x1="0" x2="1"><stop offset="0" stop-color="#c8102c"/><stop offset="1" stop-color="#7d0a18"/></linearGradient></defs><g clip-path="url(#r5)"><rect width="102" height="60" fill="#e3bda6"/><rect x="18" width="33" height="60" fill="url(#rd)"/><rect x="48" width="22" height="60" fill="#b78670"/><ellipse cx="12" cy="10" rx="17" ry="12" fill="#72c5ef"/><ellipse cx="81" cy="10" rx="6" ry="3" fill="#78c8f0"/></g></svg>
<div class="t" style="left:352.3px;top:356.52px;font-size:11.32px;color:#2a2d37;font-weight:normal;transform:scaleX(0.91);transform-origin:0 0;">ATENCIÓN Y SERVICIO AL CLIENTE</div>
<div class="t" style="right:644px;top:356.84px;font-size:11.30px;color:#2a2d37;font-weight:normal;transform:scaleX(0.97);transform-origin:100% 0;">60</div>
<div class="t" style="left:734.7px;top:356.84px;font-size:11.30px;color:#2a2d37;font-weight:normal;transform:scaleX(0.97);transform-origin:0 0;">30/08/2025</div>
<div class="a" style="left:824.3px;top:354.1px;width:57px;height:18.8px;background:#fddb7f;border-radius:6px"></div>
<div class="t" style="left:831.3px;top:358.13px;font-size:9.89px;color:#8a4a0e;font-weight:normal;transform:scaleX(0.91);transform-origin:0 0;">Por vencer</div>
<div class="t" style="right:338px;top:356.84px;font-size:11.30px;color:#2a2d37;font-weight:normal;transform:scaleX(0.97);transform-origin:100% 0;">0%</div>
<div class="a" style="left:1040.3px;top:354.1px;width:55.6px;height:18.8px;background:#e3e4e8;border-radius:6px"></div>
<div class="t" style="left:1047px;top:358.13px;font-size:9.89px;color:#3a4ea6;font-weight:normal;transform:scaleX(0.91);transform-origin:0 0;">Requerida</div>
<div class="t" style="left:1166.3px;top:356.52px;font-size:11.32px;color:#2a2d37;font-weight:normal;transform:scaleX(0.91);transform-origin:0 0;">E-learning</div>
<svg class="a" style="left:1302px;top:359px;" width="8" height="9" viewBox="0 0 8 9"><path d="M1.4 1.2 L6.2 4.2 L1.4 7.2 Z" fill="none" stroke="#3a4ea6" stroke-width="1.05" stroke-linejoin="round"/></svg>
<svg class="a" style="left:1324px;top:359px;" width="13" height="9" viewBox="0 0 13 9"><g stroke="#3a4ea6" fill="none"><path d="M0.4 1.2 L3 1.2 M0.4 4.7 L3 4.7" stroke="#7d8ac4" stroke-width="1"/><path d="M0.4 7.8 L6.7 7.8" stroke="#5666b2" stroke-width="1"/><circle cx="7.4" cy="3.5" r="2.3" stroke-width="1"/><path d="M9 5.2 L11.8 7.4" stroke-width="1.1"/></g></svg>
<div class="t" style="left:352.3px;top:429.52px;font-size:11.32px;color:#2a2d37;font-weight:normal;transform:scaleX(0.91);transform-origin:0 0;">Prevención de incendios y uso de extintores en el trabajo</div>
<div class="t" style="right:644px;top:429.84px;font-size:11.30px;color:#2a2d37;font-weight:normal;transform:scaleX(0.97);transform-origin:100% 0;">8</div>
<div class="t" style="left:734.7px;top:429.84px;font-size:11.30px;color:#2a2d37;font-weight:normal;transform:scaleX(0.97);transform-origin:0 0;">05/01/2031</div>
<div class="a" style="left:824.3px;top:427.1px;width:43.6px;height:18.8px;background:#e3e4e8;border-radius:6px"></div>
<div class="t" style="left:831.3px;top:431.13px;font-size:9.89px;color:#3a4ea6;font-weight:normal;transform:scaleX(0.91);transform-origin:0 0;">Inscrito</div>
<div class="t" style="right:338px;top:429.84px;font-size:11.30px;color:#2a2d37;font-weight:normal;transform:scaleX(0.97);transform-origin:100% 0;">0%</div>
<div class="a" style="left:1040.3px;top:427.1px;width:55.6px;height:18.8px;background:#e3e4e8;border-radius:6px"></div>
<div class="t" style="left:1047px;top:431.13px;font-size:9.89px;color:#3a4ea6;font-weight:normal;transform:scaleX(0.91);transform-origin:0 0;">Requerida</div>
<div class="t" style="left:1166.3px;top:429.52px;font-size:11.32px;color:#2a2d37;font-weight:normal;transform:scaleX(0.91);transform-origin:0 0;">E-learning</div>
<svg class="a" style="left:1302px;top:432px;" width="8" height="9" viewBox="0 0 8 9"><path d="M1.4 1.2 L6.2 4.2 L1.4 7.2 Z" fill="none" stroke="#3a4ea6" stroke-width="1.05" stroke-linejoin="round"/></svg>
<svg class="a" style="left:1324px;top:432px;" width="13" height="9" viewBox="0 0 13 9"><g stroke="#3a4ea6" fill="none"><path d="M0.4 1.2 L3 1.2 M0.4 4.7 L3 4.7" stroke="#7d8ac4" stroke-width="1"/><path d="M0.4 7.8 L6.7 7.8" stroke="#5666b2" stroke-width="1"/><circle cx="7.4" cy="3.5" r="2.3" stroke-width="1"/><path d="M9 5.2 L11.8 7.4" stroke-width="1.1"/></g></svg>
<div class="t" style="left:352.3px;top:502.52px;font-size:11.32px;color:#2a2d37;font-weight:normal;transform:scaleX(0.91);transform-origin:0 0;">7 tips para hacer un CV sobresaliente</div>
<div class="t" style="right:644px;top:502.84px;font-size:11.30px;color:#2a2d37;font-weight:normal;transform:scaleX(0.97);transform-origin:100% 0;">15</div>
<div class="a" style="left:824.3px;top:500.1px;width:43.6px;height:18.8px;background:#e3e4e8;border-radius:6px"></div>
<div class="t" style="left:831.3px;top:504.13px;font-size:9.89px;color:#3a4ea6;font-weight:normal;transform:scaleX(0.91);transform-origin:0 0;">Inscrito</div>
<div class="t" style="right:338px;top:502.84px;font-size:11.30px;color:#2a2d37;font-weight:normal;transform:scaleX(0.97);transform-origin:100% 0;">0%</div>
<div class="a" style="left:1040.3px;top:500.1px;width:55.6px;height:18.8px;background:#e3e4e8;border-radius:6px"></div>
<div class="t" style="left:1047px;top:504.13px;font-size:9.89px;color:#3a4ea6;font-weight:normal;transform:scaleX(0.91);transform-origin:0 0;">Requerida</div>
<div class="t" style="left:1166.3px;top:502.52px;font-size:11.32px;color:#2a2d37;font-weight:normal;transform:scaleX(0.91);transform-origin:0 0;">E-learning</div>
<svg class="a" style="left:1302px;top:505px;" width="8" height="9" viewBox="0 0 8 9"><path d="M1.4 1.2 L6.2 4.2 L1.4 7.2 Z" fill="none" stroke="#3a4ea6" stroke-width="1.05" stroke-linejoin="round"/></svg>
<svg class="a" style="left:1324px;top:505px;" width="13" height="9" viewBox="0 0 13 9"><g stroke="#3a4ea6" fill="none"><path d="M0.4 1.2 L3 1.2 M0.4 4.7 L3 4.7" stroke="#7d8ac4" stroke-width="1"/><path d="M0.4 7.8 L6.7 7.8" stroke="#5666b2" stroke-width="1"/><circle cx="7.4" cy="3.5" r="2.3" stroke-width="1"/><path d="M9 5.2 L11.8 7.4" stroke-width="1.1"/></g></svg>
<div class="t" style="left:352.3px;top:575.52px;font-size:11.32px;color:#2a2d37;font-weight:normal;transform:scaleX(0.91);transform-origin:0 0;">Bienestar digital: equilibrio entre salud y tecnología</div>
<div class="t" style="right:644px;top:575.84px;font-size:11.30px;color:#2a2d37;font-weight:normal;transform:scaleX(0.97);transform-origin:100% 0;">32</div>
<div class="a" style="left:824.3px;top:573.1px;width:58.7px;height:18.8px;background:#dde4fb;border-radius:6px"></div>
<div class="t" style="left:831.3px;top:577.13px;font-size:9.89px;color:#3a4ea6;font-weight:normal;transform:scaleX(0.91);transform-origin:0 0;">En proceso</div>
<div class="t" style="right:338px;top:575.84px;font-size:11.30px;color:#2a2d37;font-weight:normal;transform:scaleX(0.97);transform-origin:100% 0;">8%</div>
<div class="a" style="left:1040.3px;top:573.1px;width:55.6px;height:18.8px;background:#e3e4e8;border-radius:6px"></div>
<div class="t" style="left:1047px;top:577.13px;font-size:9.89px;color:#3a4ea6;font-weight:normal;transform:scaleX(0.91);transform-origin:0 0;">Requerida</div>
<div class="t" style="left:1166.3px;top:575.52px;font-size:11.32px;color:#2a2d37;font-weight:normal;transform:scaleX(0.91);transform-origin:0 0;">E-learning</div>
<svg class="a" style="left:1302px;top:578px;" width="8" height="9" viewBox="0 0 8 9"><path d="M1.4 1.2 L6.2 4.2 L1.4 7.2 Z" fill="none" stroke="#3a4ea6" stroke-width="1.05" stroke-linejoin="round"/></svg>
<svg class="a" style="left:1324px;top:578px;" width="13" height="9" viewBox="0 0 13 9"><g stroke="#3a4ea6" fill="none"><path d="M0.4 1.2 L3 1.2 M0.4 4.7 L3 4.7" stroke="#7d8ac4" stroke-width="1"/><path d="M0.4 7.8 L6.7 7.8" stroke="#5666b2" stroke-width="1"/><circle cx="7.4" cy="3.5" r="2.3" stroke-width="1"/><path d="M9 5.2 L11.8 7.4" stroke-width="1.1"/></g></svg>
<div class="a" style="left:1362px;top:45px;width:4px;height:588px;background:#e8eaef"></div>
<div class="a" style="left:1362px;top:45px;width:4px;height:252.5px;background:#bcbec3;border-radius:1px"></div>
<div class="a" style="left:1156px;top:537px;width:30px;height:30px;background:#fff;border-radius:50%;box-shadow:0 2px 8px rgba(0,0,0,.12)"></div>
<svg class="a" style="left:1166px;top:547px;" width="10" height="10" viewBox="0 0 10 10"><path d="M1 1 L9 9 M9 1 L1 9" stroke="#333" stroke-width="1.3"/></svg>
<div class="a" style="left:1192px;top:534.3px;width:162px;height:32.5px;background:#fff;border-radius:16px;box-shadow:0 3px 12px rgba(0,0,0,.13)"></div>
<div class="t" style="left:1201.6px;top:545.42px;font-size:11.32px;color:#1f2230;font-weight:normal;transform:scaleX(0.91);transform-origin:0 0;">Hola! ¿Cómo te puedo ayudar?</div>
<div class="a" style="left:1317px;top:584.3px;width:38px;height:38px;background:#2f4aa7;border-radius:50%;box-shadow:0 2px 6px rgba(0,0,0,.2)"></div>
<svg class="a" style="left:1327.5px;top:597.5px;" width="17" height="14" viewBox="0 0 17 14"><rect x="0.8" y="1" width="15.4" height="10.5" rx="5" fill="#fff"/><path d="M10.5 10 L13 13.3 L13 10Z" fill="#fff"/></svg>
</body></html>
